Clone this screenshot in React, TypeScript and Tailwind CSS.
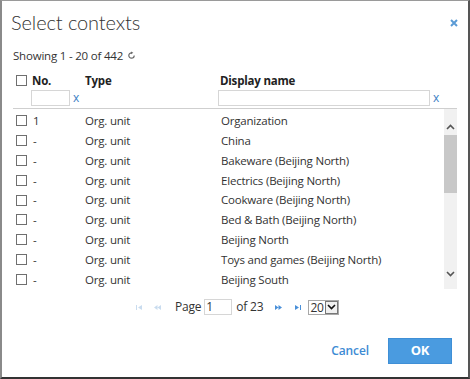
import React from "react";

const rows: [string, string][] = [
  ["1", "Organization"],
  ["-", "China"],
  ["-", "Bakeware (Beijing North)"],
  ["-", "Electrics (Beijing North)"],
  ["-", "Cookware (Beijing North)"],
  ["-", "Bed & Bath (Beijing North)"],
  ["-", "Beijing North"],
  ["-", "Toys and games (Beijing North)"],
  ["-", "Beijing South"],
];

function Box() {
  return <div className="w-[11px] h-[11px] border border-[#6f6f6f] bg-white shrink-0" />;
}

function Chevron({ up }: { up?: boolean }) {
  return (
    <svg width="9" height="6" viewBox="0 0 9 6" className="block">
      <path
        d={up ? "M1 5 L4.5 1.5 L8 5" : "M1 1 L4.5 4.5 L8 1"}
        fill="none"
        stroke="#555"
        strokeWidth="1.6"
      />
    </svg>
  );
}

export default function App() {
  return (
    <div
      className="w-[470px] h-[379px] bg-white border-t border-l-2 border-r-2 border-b-2 border-t-[#9a9a9a] border-l-[#8a8a8a] border-r-[#555] border-b-[#333] text-[#333] flex flex-col text-[11.5px] tracking-[-0.2px]"
      style={{ fontFamily: '"Open Sans", sans-serif' }}
    >
      <div className="h-[41px] flex items-center justify-between pl-[9px] pr-[10px] pt-[1px] shrink-0">
        <span className="text-[20px] font-light text-[#333] tracking-[-0.1px]" style={{ fontFamily: '"Lato", "Open Sans", sans-serif' }}>
          Select contexts
        </span>
        <svg width="8" height="8" viewBox="0 0 8 8" className="mt-[2px]">
          <path d="M1 1 L7 7 M7 1 L1 7" stroke="#5b9bd5" strokeWidth="2" />
        </svg>
      </div>
      <div className="h-[27px] flex items-center pl-[11px] text-[#333] shrink-0">
        <span>Showing 1 - 20 of 442</span>
        <svg width="9" height="9" viewBox="0 0 10 10" className="ml-[4px]">
          <path d="M8 5 A3 3 0 1 1 5 2" fill="none" stroke="#666" strokeWidth="1.3" />
          <path d="M4.5 0.5 L7 2 L4.5 3.6 Z" fill="#666" />
        </svg>
      </div>
      <div className="mx-[11px] shrink-0">
        <div className="h-[21px] pt-[2px] flex items-center font-bold text-[#222]">
          <div className="w-[19px] pl-[3px] flex items-center"><Box /></div>
          <div className="w-[53px]">No.</div>
          <div className="w-[135px]">Type</div>
          <div>Display name</div>
        </div>
        <div className="h-[19px] flex items-start border-b border-[#cfcfcf]">
          <div className="w-[18px]" />
          <div className="w-[39px] h-[16px] border border-[#d6d6d6]" />
          <span className="ml-[3px] text-[12px] leading-[16px] text-[#3b7fc4]">x</span>
          <div className="w-[139px]" />
          <div className="w-[212px] h-[16px] border border-[#d6d6d6]" />
          <span className="ml-[3px] text-[12px] leading-[16px] text-[#3b7fc4]">x</span>
        </div>
        <div className="flex h-[180px]">
          <div className="flex-1 flex flex-col pt-[2px]">
            {rows.map(([n, name], i) => (
              <div key={i} className="h-[19.8px] flex items-center text-[#333]">
                <div className="w-[19px] pl-[3px] flex items-center"><Box /></div>
                <div className="w-[53px] pl-[1px]">{n}</div>
                <div className="w-[136px]">Org. unit</div>
                <div>{name}</div>
              </div>
            ))}
          </div>
          <div className="w-[13px] bg-[#f1f1f1] flex flex-col items-center">
            <div className="h-[26px] flex items-end justify-center pb-[5px]"><Chevron up /></div>
            <div className="w-full h-[58px] bg-[#c8c8c8]" />
            <div className="flex-1" />
            <div className="h-[20px] flex items-start justify-center pt-[2px]"><Chevron /></div>
          </div>
        </div>
      </div>
      <div className="mt-[10px] h-[16px] flex items-center text-[12px] text-[#333] shrink-0">
        <div className="w-[134px]" />
        <svg width="6" height="5" viewBox="0 0 6 5"><path d="M0.5 0 V5" stroke="#c9dcef" /><path d="M6 0 L2 2.5 L6 5 Z" fill="#c9dcef" /></svg>
        <svg width="7" height="5" viewBox="0 0 7 5" className="ml-[12px]"><path d="M3.5 0 L0 2.5 L3.5 5 Z M7 0 L3.5 2.5 L7 5 Z" fill="#c9dcef" /></svg>
        <span className="ml-[14px]">Page</span>
        <div className="ml-[3px] w-[28px] h-[16px] border border-[#d6d6d6] pl-[1px] leading-[14px]">1</div>
        <span className="ml-[4px]">of 23</span>
        <svg width="7" height="5" viewBox="0 0 7 5" className="ml-[12px]"><path d="M0 0 L3.5 2.5 L0 5 Z M3.5 0 L7 2.5 L3.5 5 Z" fill="#4a90d9" /></svg>
        <svg width="6" height="5" viewBox="0 0 6 5" className="ml-[13px]"><path d="M0 0 L4 2.5 L0 5 Z" fill="#4a90d9" /><path d="M5.5 0 V5" stroke="#4a90d9" /></svg>
        <div className="ml-[7px] h-[15px] flex items-center border border-[#a8a8a8]">
          <span className="pl-[1px] pr-[1px] leading-[13px]">20</span>
          <div className="w-[13px] h-[13px] border border-[#777] bg-[#f0f0f0] flex items-center justify-center">
            <svg width="9" height="6" viewBox="0 0 9 6"><path d="M1 1 L4.5 4.5 L8 1" fill="none" stroke="#111" strokeWidth="1.6" /></svg>
          </div>
        </div>
      </div>
      <div className="mt-[23px] h-[26px] flex items-center justify-end pr-[16px] shrink-0">
        <span className="text-[12px] font-semibold text-[#3d8bd4] mr-[19px] tracking-[-0.1px]">Cancel</span>
        <div className="w-[64px] h-[26px] bg-[#4a9be0] border border-[#3f8fd6] flex items-center justify-center text-white text-[13px] font-bold">OK</div>
      </div>
    </div>
  );
}
